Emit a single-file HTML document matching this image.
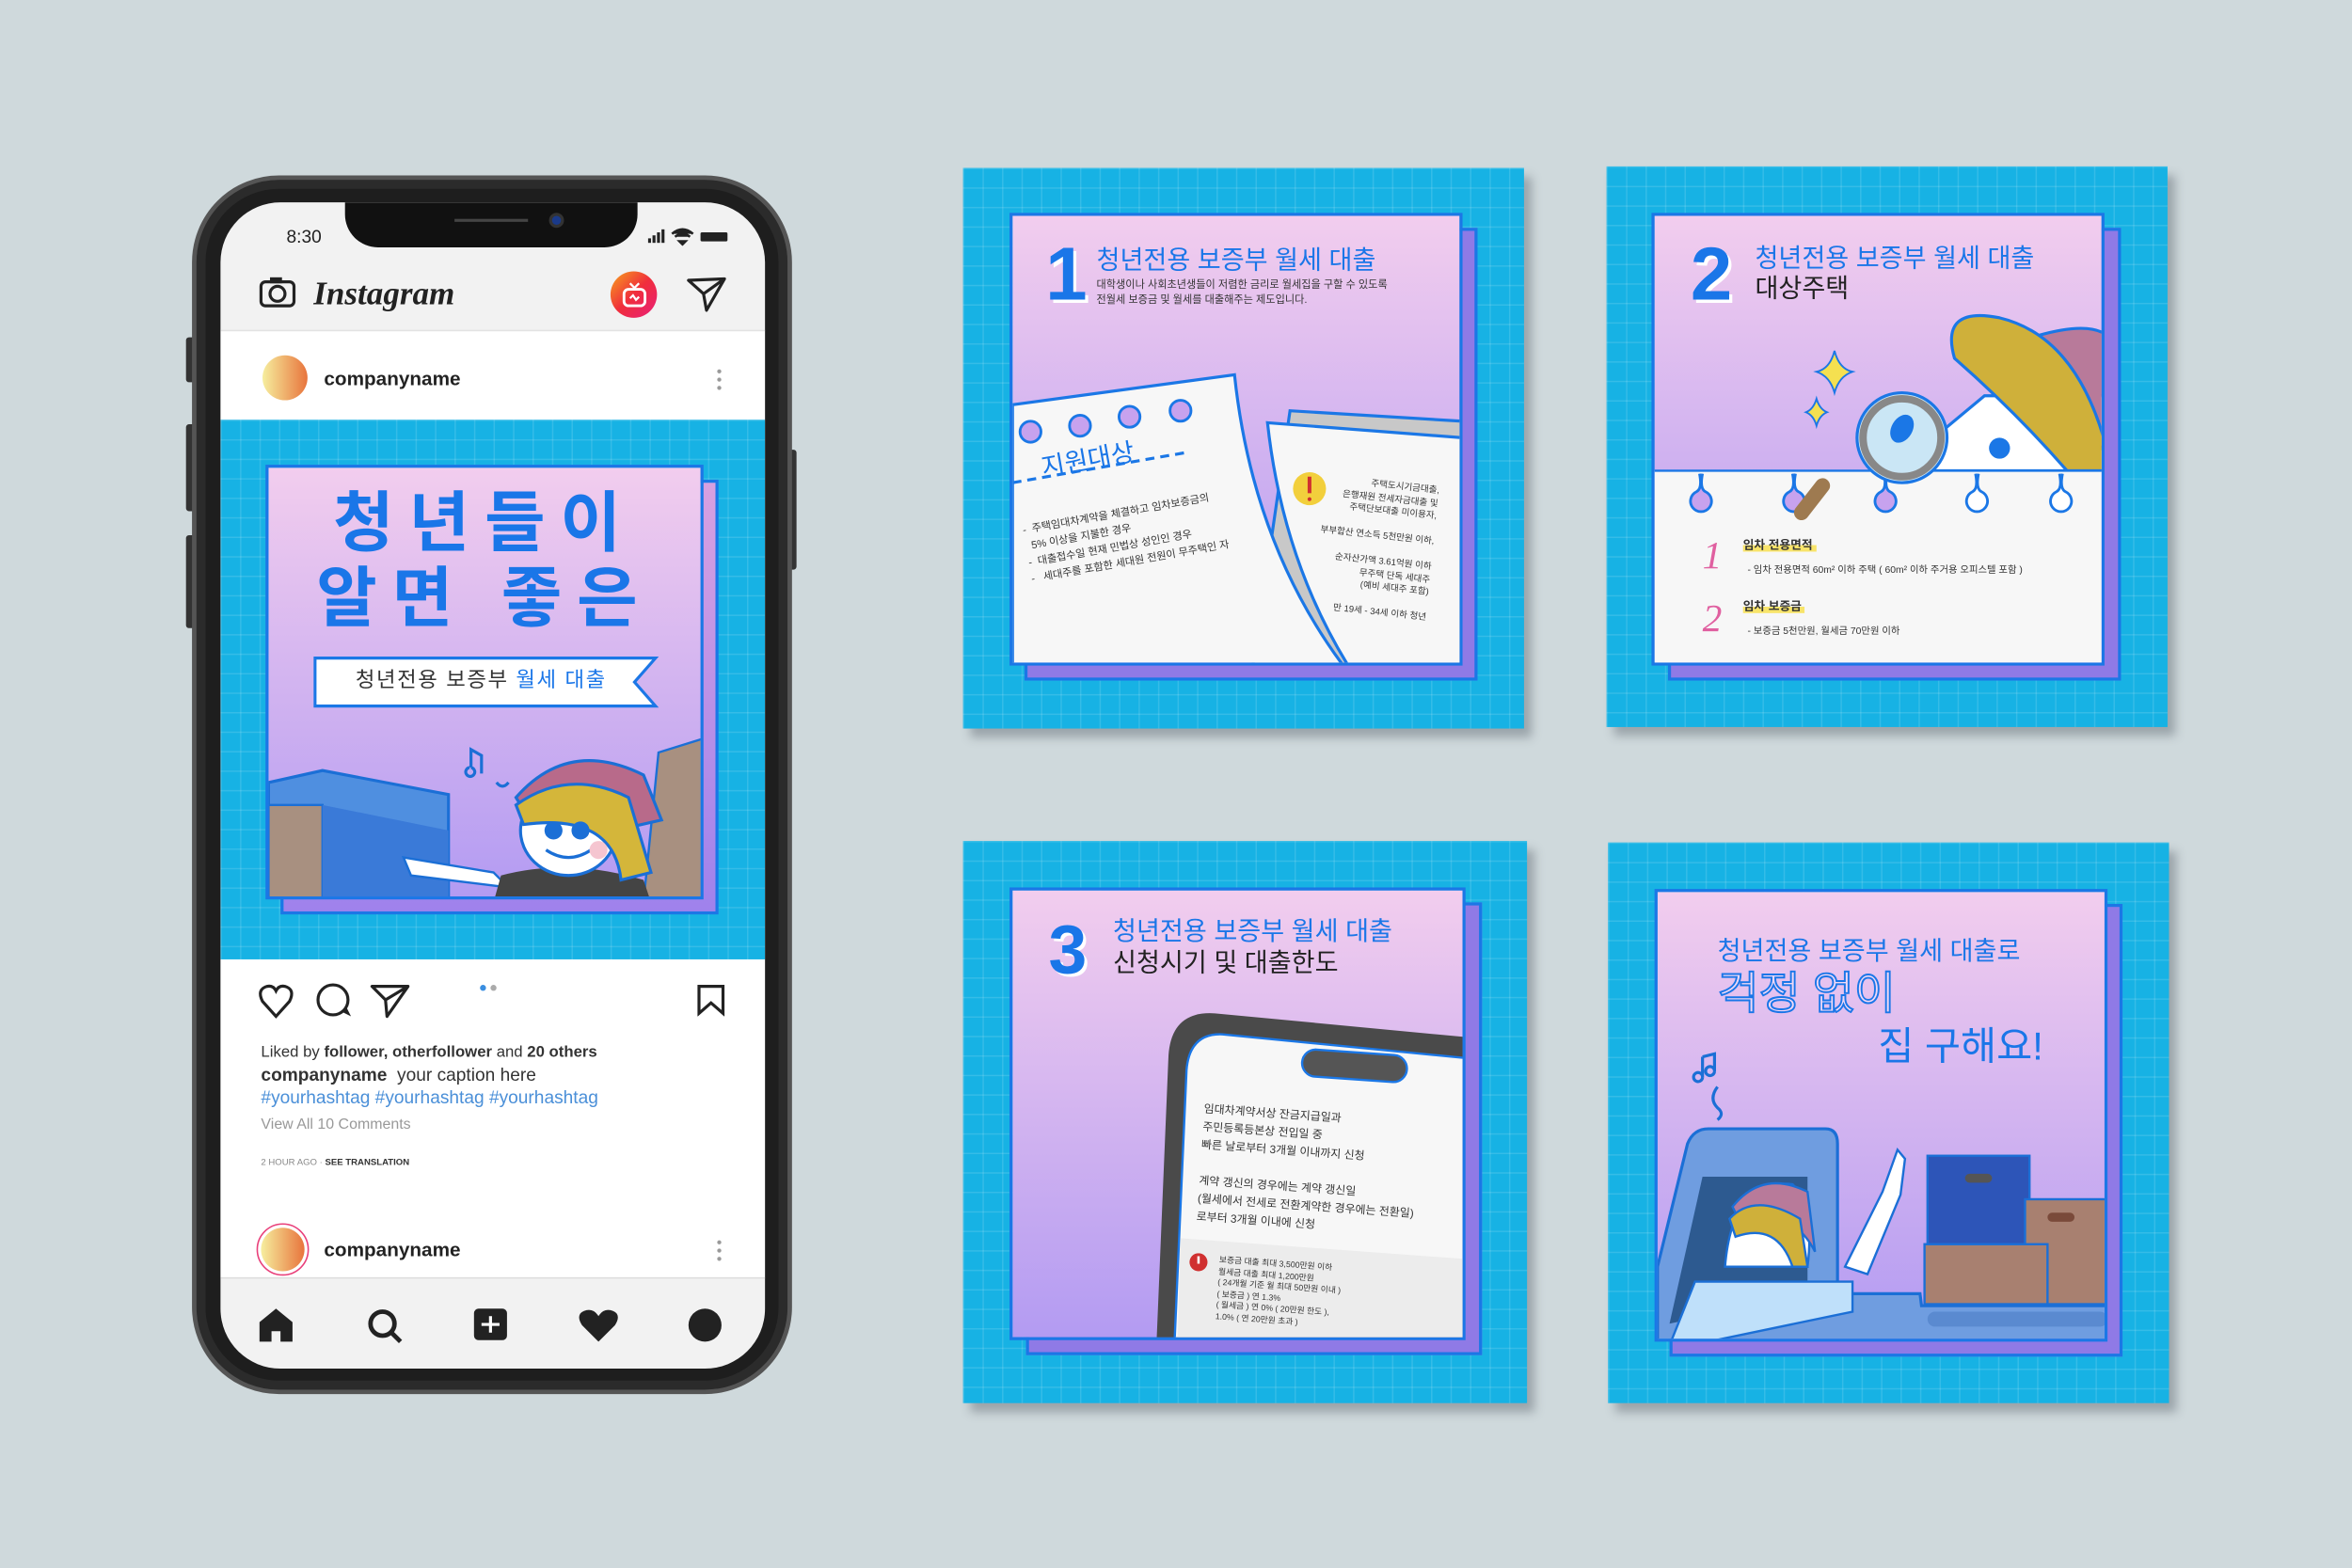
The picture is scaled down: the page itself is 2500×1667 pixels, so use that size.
<!DOCTYPE html>
<html><head><meta charset="utf-8"><style>
*{margin:0;padding:0;box-sizing:border-box}
body{width:2500px;height:1667px;background:#cfd9dc;overflow:hidden;font-family:"Liberation Sans","Noto Sans CJK KR",sans-serif}
#s{position:absolute;left:0;top:0;width:1568px;height:1046px;transform:scale(1.5944,1.5937);transform-origin:0 0}
.a{position:absolute}
.blue{background-color:#17b2e4;background-image:linear-gradient(rgba(255,255,255,.13) 1px,transparent 1px),linear-gradient(90deg,rgba(255,255,255,.13) 1px,transparent 1px);background-size:13px 13px}
.card{box-shadow:5px 6px 6px rgba(60,70,80,.35)}
.back{background:#8f7ae6;border:2px solid #1b77e6}
.pan{background:linear-gradient(#f2cdee,#b39bf2);border:2px solid #1b77e6;overflow:hidden}
.t{white-space:nowrap;line-height:1}
.bl{color:#1a76e8}
.dk{color:#333}
</style></head><body><div id="s">

<!-- PHONE -->
<div class="a" style="left:124px;top:225px;width:8px;height:30px;background:#333;border-radius:2px"></div>
<div class="a" style="left:124px;top:283px;width:8px;height:58px;background:#333;border-radius:2px"></div>
<div class="a" style="left:124px;top:357px;width:8px;height:62px;background:#333;border-radius:2px"></div>
<div class="a" style="left:523px;top:300px;width:8px;height:80px;background:#333;border-radius:2px"></div>
<div class="a" style="left:128px;top:117px;width:400px;height:813px;border-radius:58px;background:#1e1e1e;border:3px solid #555;box-shadow:inset 0 0 0 6px #2b2b2b"></div>
<div class="a" style="left:147px;top:135px;width:363px;height:778px;border-radius:40px;background:#f2f2f2;overflow:hidden">
  <div class="a" style="left:83px;top:0;width:195px;height:30px;background:#111;border-radius:0 0 22px 22px"></div>
  <div class="a" style="left:156px;top:11px;width:49px;height:2px;background:#444"></div>
  <div class="a" style="left:219px;top:7px;width:10px;height:10px;border-radius:50%;background:#1a3a8a;border:2px solid #333"></div>
  <div class="a t" style="left:44px;top:17px;font-size:12px;color:#222">8:30</div>
  <svg class="a" style="left:285px;top:17px" width="56" height="12"><rect x="0" y="7" width="2" height="3" fill="#222"/><rect x="3" y="5" width="2" height="5" fill="#222"/><rect x="6" y="3" width="2" height="7" fill="#222"/><rect x="9" y="1" width="2" height="9" fill="#222"/><path d="M16 4 Q23 -2 30 4 M18 6 Q23 2 28 6 M21 9 L23 11 L25 9Z" stroke="#222" stroke-width="1.6" fill="#222"/><rect x="35" y="3" width="18" height="6" rx="1" fill="#222"/></svg>
  <svg class="a" style="left:25px;top:48px" width="26" height="24"><rect x="2" y="5" width="22" height="16" rx="3" fill="none" stroke="#222" stroke-width="2"/><rect x="8" y="2" width="8" height="4" fill="#222"/><circle cx="13" cy="13" r="5" fill="none" stroke="#222" stroke-width="2"/></svg>
  <div class="a t" style="left:62px;top:50px;font-family:'Liberation Serif',serif;font-style:italic;font-weight:bold;font-size:22px;color:#222">Instagram</div>
  <div class="a" style="left:260px;top:46px;width:31px;height:31px;border-radius:50%;background:linear-gradient(135deg,#f7a21c,#f02e3c,#e9207a)"></div>
  <svg class="a" style="left:267px;top:53px" width="18" height="18"><rect x="2" y="5" width="14" height="11" rx="3" fill="none" stroke="#fff" stroke-width="1.8"/><path d="M6 1 L9 4 L12 1 M6 11 L8 9 L10 12 L12 10" stroke="#fff" stroke-width="1.4" fill="none"/></svg>
  <svg class="a" style="left:310px;top:48px" width="28" height="26"><path d="M2 4 L26 3 L14 24 L12 13 Z M12 13 L26 3" fill="none" stroke="#222" stroke-width="2" stroke-linejoin="round"/></svg>
  <div class="a" style="left:0;top:85px;width:363px;height:60px;background:#fff;border-top:1px solid #e2e2e2"></div>
  <div class="a" style="left:28px;top:102px;width:30px;height:30px;border-radius:50%;background:linear-gradient(90deg,#f6ee9e,#e8743c)"></div>
  <div class="a t" style="left:69px;top:111px;font-size:13px;font-weight:bold;color:#222">companyname</div>
  <div class="a" style="left:331px;top:110px;width:3px;height:16px;background:radial-gradient(circle,#999 1.2px,transparent 1.5px) 0 0/3px 5.5px"></div>
  <div class="a blue" style="left:0;top:145px;width:363px;height:360px"></div>
  <div class="a" style="left:40px;top:185px;width:292px;height:290px;background:linear-gradient(#d8a0e0,#9f82ec);border:2px solid #1b77e6"></div>
  <div class="a pan" style="left:30px;top:175px;width:292px;height:290px">
    <div class="a t bl" style="left:0;width:288px;top:16px;text-align:center;font-size:44px;font-weight:bold;letter-spacing:10px">청년들이</div>
    <div class="a t bl" style="left:0;width:288px;top:66px;text-align:center;font-size:44px;font-weight:bold;letter-spacing:10px">알면 좋은</div>
    <svg class="a" style="left:30px;top:125px" width="232" height="38"><path d="M1 2 L228 2 L214 18 L228 34 L1 34 Z" fill="#fff" stroke="#1b77e6" stroke-width="2"/></svg>
    <div class="a t" style="left:58px;top:134px;font-size:14px;color:#333;letter-spacing:1px">청년전용 보증부 <span class="bl">월세 대출</span></div>
    <svg class="a" style="left:0;top:180px" width="292" height="110">
      <path d="M0 30 L36 22 L120 38 L120 110 L0 110Z" fill="#4f8fe0" stroke="#1b6fd6" stroke-width="2"/>
      <path d="M0 45 L36 45 L36 110 L0 110Z" fill="#a89080" stroke="#1b6fd6" stroke-width="1.5"/>
      <path d="M36 45 L120 62 L120 110 L36 110Z" fill="#3a7ad8"/>
      <path d="M260 10 L292 0 L292 110 L250 110Z" fill="#a89080" stroke="#1b6fd6" stroke-width="1.5"/>
      <path d="M90 80 L150 90 L160 100 L95 92Z" fill="#fff" stroke="#1b6fd6" stroke-width="1.5"/>
      <path d="M150 110 L155 92 Q200 80 250 95 L255 110Z" fill="#444"/>
      <ellipse cx="200" cy="62" rx="32" ry="30" fill="#fff" stroke="#1b6fd6" stroke-width="2"/>
      <path d="M165 40 Q200 0 250 25 L262 55 L240 60 Q210 30 170 48Z" fill="#b86a8a" stroke="#1b6fd6" stroke-width="2"/>
      <path d="M165 45 Q200 20 240 40 L255 90 L235 95 Q230 50 170 58Z" fill="#d4b63a" stroke="#1b6fd6" stroke-width="2"/>
      <circle cx="190" cy="62" r="6" fill="#1b6fd6"/><circle cx="208" cy="62" r="6" fill="#1b6fd6"/>
      <path d="M185 75 Q200 85 215 75" fill="none" stroke="#1b6fd6" stroke-width="2"/>
      <circle cx="220" cy="75" r="6" fill="#f5c5d0"/>
      <path d="M135 20 L135 8 L142 12 L142 24 M135 20 a3 3 0 1 1 -1 0 M152 30 q4 5 8 0" fill="none" stroke="#1b6fd6" stroke-width="2"/>
    </svg>
  </div>
  <div class="a" style="left:0;top:505px;width:363px;height:213px;background:#fff"></div>
  <svg class="a" style="left:25px;top:519px" width="120" height="28"><path d="M12 24 L3 14 Q-1 6 6 4 Q10 3 12 7 Q14 3 18 4 Q25 6 21 14Z" fill="none" stroke="#222" stroke-width="2"/><circle cx="50" cy="13" r="10" fill="none" stroke="#222" stroke-width="2"/><path d="M56 21 L62 24 L59 18" fill="#222"/><path d="M76 4 L100 4 L86 24 L85 13Z M85 13 L100 4" fill="none" stroke="#222" stroke-width="2" stroke-linejoin="round"/></svg>
  <div class="a" style="left:173px;top:522px;width:4px;height:4px;border-radius:50%;background:#3a8ee0"></div>
  <div class="a" style="left:180px;top:522px;width:4px;height:4px;border-radius:50%;background:#aaa"></div>
  <svg class="a" style="left:317px;top:521px" width="20" height="22"><path d="M2 2 L18 2 L18 20 L10 13 L2 20Z" fill="none" stroke="#222" stroke-width="2"/></svg>
  <div class="a t" style="left:27px;top:562px;font-size:10.5px;color:#333">Liked by <b>follower, otherfollower</b> and <b>20 others</b></div>
  <div class="a t" style="left:27px;top:576px;font-size:12px;color:#333"><b>companyname</b>&nbsp; your caption here</div>
  <div class="a t" style="left:27px;top:591px;font-size:12px;color:#4a8fd8">#yourhashtag #yourhashtag #yourhashtag</div>
  <div class="a t" style="left:27px;top:611px;font-size:10px;color:#999">View All 10 Comments</div>
  <div class="a t" style="left:27px;top:638px;font-size:6px;color:#888">2 HOUR AGO · <b style="color:#333">SEE TRANSLATION</b></div>
  <div class="a" style="left:24px;top:681px;width:35px;height:35px;border-radius:50%;border:1.5px solid #e9407a;padding:2px"><div style="width:100%;height:100%;border-radius:50%;background:linear-gradient(90deg,#f6ee9e,#e8743c)"></div></div>
  <div class="a t" style="left:69px;top:692px;font-size:13px;font-weight:bold;color:#222">companyname</div>
  <div class="a" style="left:331px;top:691px;width:3px;height:16px;background:radial-gradient(circle,#999 1.2px,transparent 1.5px) 0 0/3px 5.5px"></div>
  <div class="a" style="left:0;top:717px;width:363px;height:1px;background:#ddd"></div>
  <svg class="a" style="left:24px;top:736px" width="320" height="26"><path d="M2 24 L2 11 L13 2 L24 11 L24 24 L16 24 L16 17 L10 17 L10 24Z" fill="#222"/><circle cx="84" cy="12" r="8" fill="none" stroke="#222" stroke-width="3"/><path d="M90 18 L96 24" stroke="#222" stroke-width="3"/><rect x="145" y="2" width="22" height="21" rx="3" fill="#222"/><path d="M156 7 V18 M150 12.5 H162" stroke="#fff" stroke-width="2"/><path d="M228 24 L217 13 Q212 5 220 3 Q225 2 228 7 Q231 2 236 3 Q244 5 239 13Z" fill="#222"/><circle cx="299" cy="13" r="11" fill="#222"/></svg>
</div>

<!-- CARD 1 -->
<div class="a blue card" style="left:642px;top:112px;width:374px;height:374px"></div>
<div class="a back" style="left:683px;top:152px;width:302px;height:302px"></div>
<div class="a pan" style="left:673px;top:142px;width:302px;height:302px">
  <div class="a t bl" style="left:22px;top:14px;font-size:50px;font-weight:bold;text-shadow:2px 2px 0 #fff">1</div>
  <div class="a t bl" style="left:56px;top:21px;font-size:17px">청년전용 보증부 월세 대출</div>
  <div class="a t dk" style="left:56px;top:42px;font-size:7px;line-height:10px">대학생이나 사회초년생들이 저렴한 금리로 월세집을 구할 수 있도록<br>전월세 보증금 및 월세를 대출해주는 제도입니다.</div>
  <svg class="a" style="left:0;top:100px" width="302" height="202">
    <path d="M185 30 L300 37 L300 202 L160 202 Z" fill="#c8c8c8" stroke="#1b77e6" stroke-width="2"/>
    <path d="M170 38 L300 48 L300 202 L225 202 Q180 130 170 38Z" fill="#f7f7f7" stroke="#1b77e6" stroke-width="2"/>
    <path d="M0 26 L148 6 Q160 120 222 202 L0 202Z" fill="#f7f7f7" stroke="#1b77e6" stroke-width="2"/>
    <g fill="#c7a2ee" stroke="#1b77e6" stroke-width="1.8"><circle cx="12" cy="44" r="7"/><circle cx="45" cy="40" r="7"/><circle cx="78" cy="34" r="7"/><circle cx="112" cy="30" r="7"/></g>
    <path d="M0 78 L115 58" stroke="#1b77e6" stroke-width="2" stroke-dasharray="6 4"/>
    <circle cx="198" cy="82" r="11" fill="#f2cf3c"/><path d="M198 74 V85" stroke="#d03030" stroke-width="2.5"/><circle cx="198" cy="89" r="1.3" fill="#d03030"/>
  </svg>
  <div class="a t bl" style="left:18px;top:160px;font-size:17px;transform:rotate(-10deg);transform-origin:0 0">지원대상</div>
  <div class="a t dk" style="left:6px;top:205px;font-size:7px;line-height:11px;transform:rotate(-10deg);transform-origin:0 0">-&nbsp; 주택임대차계약을 체결하고 임차보증금의<br>&nbsp; 5% 이상을 지불한 경우<br>- &nbsp;대출접수일 현재 민법상 성인인 경우<br>- &nbsp; 세대주를 포함한 세대원 전원이 무주택인 자</div>
  <div class="a t dk" style="left:205px;top:180px;font-size:6px;line-height:8.5px;text-align:right;transform:rotate(6deg);transform-origin:100% 0;width:80px">주택도시기금대출,<br>은행재원 전세자금대출 및<br>주택단보대출 미이용자,<br><br>부부합산 연소득 5천만원 이하,<br><br>순자산가액 3.61억원 이하<br>무주택 단독 세대주<br>(예비 세대주 포함)<br><br>만 19세 - 34세 이하 청년</div>
</div>

<!-- CARD 2 -->
<div class="a blue card" style="left:1071px;top:111px;width:374px;height:374px"></div>
<div class="a back" style="left:1112px;top:152px;width:302px;height:302px"></div>
<div class="a pan" style="left:1101px;top:142px;width:302px;height:302px">
  <div class="a t bl" style="left:24px;top:14px;font-size:50px;font-weight:bold;text-shadow:2px 2px 0 #fff">2</div>
  <div class="a t bl" style="left:67px;top:20px;font-size:17px">청년전용 보증부 월세 대출</div>
  <div class="a t" style="left:67px;top:40px;font-size:17px;color:#222">대상주택</div>
  <svg class="a" style="left:0;top:60px" width="302" height="242">
    <path d="M160 110 L220 60 L302 60 L302 110Z" fill="#fff" stroke="#1b77e6" stroke-width="2"/>
    <path d="M255 20 Q290 10 302 20 L302 100 Q270 60 255 20Z" fill="#b87a9a" stroke="#1b77e6" stroke-width="2"/>
    <path d="M200 35 Q190 0 230 8 Q280 20 300 90 L300 110 L275 110 Q240 70 200 35Z" fill="#cfb03a" stroke="#1b77e6" stroke-width="2"/>
    <circle cx="230" cy="95" r="7" fill="#1b77e6"/>
    <path d="M0 110 L302 110 L302 242 L0 242Z" fill="#f7f7f7"/>
    <path d="M0 110 L302 110" stroke="#1b77e6" stroke-width="1.5"/>
    <g fill="#c7a2ee" stroke="#1b77e6" stroke-width="1.8"><path d="M30 112 q2 10 -2 12 a7 7 0 1 0 6 0 q-4 -2 -2 -12"/><path d="M92 112 q2 10 -2 12 a7 7 0 1 0 6 0 q-4 -2 -2 -12"/><path d="M153 112 q2 10 -2 12 a7 7 0 1 0 6 0 q-4 -2 -2 -12"/></g>
    <g fill="#fff" stroke="#1b77e6" stroke-width="1.8"><path d="M214 112 q2 10 -2 12 a7 7 0 1 0 6 0 q-4 -2 -2 -12"/><path d="M270 112 q2 10 -2 12 a7 7 0 1 0 6 0 q-4 -2 -2 -12"/></g>
    <path d="M112 120 L98 138" stroke="#9e7a50" stroke-width="10" stroke-linecap="round"/>
    <circle cx="165" cy="88" r="30" fill="#cfe8f5" stroke="#1b77e6" stroke-width="2"/>
    <circle cx="165" cy="88" r="26" fill="rgba(200,230,245,.7)" stroke="#888" stroke-width="5"/>
    <ellipse cx="165" cy="82" rx="7" ry="10" fill="#1b77e6" transform="rotate(30 165 82)"/>
    <path d="M120 30 q3 12 12 14 q-9 3 -12 14 q-3 -11 -12 -14 q9 -2 12 -14Z M108 62 q2 7 7 9 q-5 2 -7 9 q-2 -7 -7 -9 q5 -2 7 -9Z" fill="#f5e050" stroke="#1b77e6" stroke-width="1.2"/>
  </svg>
  <div class="a t" style="left:32px;top:214px;font-size:26px;color:#e060a0;font-style:italic;font-family:'Liberation Serif',serif">1</div>
  <div class="a t" style="left:59px;top:216px;font-size:8px;font-weight:bold;color:#333;background:linear-gradient(transparent 45%,#f8e46a 45%)">임차 전용면적&nbsp;</div>
  <div class="a t dk" style="left:62px;top:234px;font-size:6.5px">- 임차 전용면적 60m² 이하 주택 ( 60m² 이하 주거용 오피스텔 포함 )</div>
  <div class="a t" style="left:32px;top:256px;font-size:26px;color:#e060a0;font-style:italic;font-family:'Liberation Serif',serif">2</div>
  <div class="a t" style="left:59px;top:257px;font-size:8px;font-weight:bold;color:#333;background:linear-gradient(transparent 45%,#f8e46a 45%)">임차 보증금&nbsp;</div>
  <div class="a t dk" style="left:62px;top:275px;font-size:6.5px">- 보증금 5천만원, 월세금 70만원 이하</div>
</div>

<!-- CARD 3 -->
<div class="a blue card" style="left:642px;top:561px;width:376px;height:375px"></div>
<div class="a back" style="left:684px;top:602px;width:304px;height:302px"></div>
<div class="a pan" style="left:673px;top:592px;width:304px;height:302px">
  <div class="a t bl" style="left:24px;top:16px;font-size:46px;font-weight:bold;text-shadow:2px 2px 0 #fff">3</div>
  <div class="a t bl" style="left:67px;top:19px;font-size:17px">청년전용 보증부 월세 대출</div>
  <div class="a t" style="left:67px;top:40px;font-size:17px;color:#222">신청시기 및 대출한도</div>
  <svg class="a" style="left:0;top:70px" width="304" height="232">
    <path d="M96 232 L104 40 Q106 10 135 12 L304 28 L304 232Z" fill="#4a4a4a"/>
    <path d="M108 232 L116 50 Q118 25 140 26 L304 42 L304 232Z" fill="#f7f7f7" stroke="#1b77e6" stroke-width="1.5"/>
    <rect x="193" y="38" width="70" height="18" rx="9" fill="#555" stroke="#1b77e6" stroke-width="1.5" transform="rotate(4 228 47)"/>
    <path d="M112 162 L304 176 L304 232 L110 232Z" fill="#ececec"/>
    <circle cx="124" cy="178" r="6" fill="#d03030"/><path d="M124 174 V179" stroke="#fff" stroke-width="1.6"/>
  </svg>
  <div class="a t dk" style="left:128px;top:140px;font-size:7.5px;line-height:12px;transform:rotate(4deg);transform-origin:0 0">임대차계약서상 잔금지급일과<br>주민등록등본상 전입일 중<br>빠른 날로부터 3개월 이내까지 신청<br><br>계약 갱신의 경우에는 계약 갱신일<br>(월세에서 전세로 전환계약한 경우에는 전환일)<br>로부터 3개월 이내에 신청</div>
  <div class="a t dk" style="left:138px;top:244px;font-size:5.5px;line-height:7.5px;transform:rotate(4deg);transform-origin:0 0">보증금 대출 최대 3,500만원 이하<br>월세금 대출 최대 1,200만원<br>( 24개월 기준 월 최대 50만원 이내 )<br>( 보증금 ) 연 1.3%<br>( 월세금 ) 연 0% ( 20만원 한도 ),<br>1.0% ( 연 20만원 초과 )</div>
</div>

<!-- CARD 4 -->
<div class="a blue card" style="left:1072px;top:562px;width:374px;height:374px"></div>
<div class="a back" style="left:1113px;top:603px;width:302px;height:302px"></div>
<div class="a pan" style="left:1103px;top:593px;width:302px;height:302px">
  <div class="a t bl" style="left:40px;top:31px;font-size:17px">청년전용 보증부 월세 대출로</div>
  <div class="a t" style="left:40px;top:54px;font-size:30px;color:#f0d8f6;-webkit-text-stroke:1.2px #1a76e8">걱정 없이</div>
  <div class="a t bl" style="left:147px;top:90px;font-size:26px">집 구해요!</div>
  <svg class="a" style="left:0;top:100px" width="302" height="202">
    <path d="M30 10 L30 24 M30 10 L38 8 L38 20 M30 24 a3 3 0 1 1 0 -1 M38 20 a3 3 0 1 1 0 -1 M40 30 q-6 8 0 14 q5 4 0 8" fill="none" stroke="#1b6fd6" stroke-width="2"/>
    <rect x="180" y="76" width="68" height="60" fill="#2d55b8" stroke="#1b6fd6" stroke-width="1.5"/>
    <rect x="205" y="88" width="18" height="6" rx="3" fill="#555"/>
    <rect x="245" y="105" width="57" height="70" fill="#a88070" stroke="#1b6fd6" stroke-width="1.5"/>
    <rect x="260" y="114" width="18" height="6" rx="3" fill="#7a4a3a"/>
    <rect x="178" y="135" width="82" height="40" fill="#a88070" stroke="#1b6fd6" stroke-width="1.5"/>
    <path d="M0 150 L20 68 Q24 58 34 58 L112 58 Q120 58 120 68 L120 168 L175 168 L176 176 L302 176 L302 202 L0 202Z" fill="#6f9de0" stroke="#1b6fd6" stroke-width="2"/>
    <path d="M8 188 L30 90 L100 90 L100 168Z" fill="#2d5a90"/>
    <rect x="180" y="180" width="120" height="10" rx="5" fill="#5a8ad0"/>
    <path d="M45 150 Q50 90 90 95 Q105 110 100 150Z" fill="#fff" stroke="#1b6fd6" stroke-width="1.5"/>
    <path d="M50 110 Q70 85 100 100 L105 140 Q90 110 55 120Z" fill="#b87a9a" stroke="#1b6fd6" stroke-width="1.5"/>
    <path d="M48 118 Q65 100 95 118 L100 150 L90 150 Q80 120 52 130Z" fill="#cfb03a" stroke="#1b6fd6" stroke-width="1.5"/>
    <path d="M125 150 L150 100 L160 72 L165 78 L162 102 L140 155Z" fill="#fff" stroke="#1b6fd6" stroke-width="1.5"/>
    <path d="M5 210 L25 160 L130 160 L130 180 L10 205Z" fill="#bfe0fa" stroke="#1b6fd6" stroke-width="1.5"/>
  </svg>
</div>

</div></body></html>
